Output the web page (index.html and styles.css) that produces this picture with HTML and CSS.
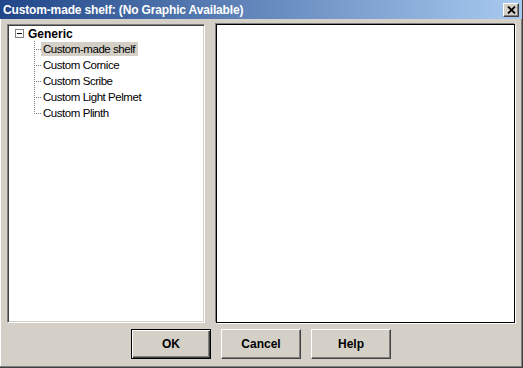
FILE: index.html
```html
<!DOCTYPE html>
<html lang="en">

<head>
    <meta charset="UTF-8">
    <title>Custom-made shelf</title>
    <link rel="stylesheet" href="styles.css">
</head>

<body>
    <div class="window">
        <div class="titlebar">
            <span class="title">Custom-made shelf: (No Graphic Available)</span>
            <button class="close">
                <svg width="9" height="8" viewBox="0 0 9 8">
                    <path d="M1 0.5 L8 7.5 M8 0.5 L1 7.5" stroke="#000" stroke-width="1.8" />
                </svg>
            </button>
        </div>

        <div class="content">
            <div class="tree-panel">
                <div class="tree-root">
                    <span class="expander"></span>
                    <span class="root-label">Generic</span>
                </div>
                <ul class="tree-items">
                    <li><span class="item selected">Custom-made shelf</span></li>
                    <li><span class="item">Custom Cornice</span></li>
                    <li><span class="item">Custom Scribe</span></li>
                    <li><span class="item">Custom Light Pelmet</span></li>
                    <li><span class="item">Custom Plinth</span></li>
                </ul>
            </div>

            <!-- preview area -->
            <div class="preview-panel"></div>
        </div>

        <div class="buttons">
            <button class="btn default">OK</button>
            <button class="btn">Cancel</button>
            <button class="btn">Help</button>
        </div>
    </div>
</body>

</html>
```

FILE: styles.css
```css
body {
    margin: 0;
    padding: 0;
    font-family: "Liberation Sans", Arial, sans-serif;
    font-size: 12px;
    background-color: #d4d0c8;
}

.window {
    width: 523px;
    height: 368px;
    box-sizing: border-box;
    display: flex;
    flex-direction: column;
    background-color: #d4d0c8;
    border-right: 1px solid #404040;
    border-bottom: 1px solid #404040;
    box-shadow: inset -1px -1px 0 #808080, inset 1px 0 0 #fff;
}

.titlebar {
    height: 19px;
    display: flex;
    align-items: center;
    justify-content: space-between;
    padding: 0 3px 0 3px;
    background: linear-gradient(to right, #214689, #a8caf0);
}

.title {
    color: #fff;
    font-weight: bold;
    font-size: 12px;
    letter-spacing: -0.15px;
    white-space: nowrap;
}

.close {
    width: 16px;
    height: 14px;
    padding: 0;
    margin-top: 1px;
    display: flex;
    align-items: center;
    justify-content: center;
    background-color: #d4d0c8;
    border: 1px solid;
    border-color: #fff #404040 #404040 #fff;
    box-shadow: inset -1px -1px 0 #808080;
}

.content {
    display: flex;
    gap: 11px;
    padding: 5px 0 0 7px;
}

.tree-panel {
    width: 198px;
    height: 299px;
    box-sizing: border-box;
    background-color: #fff;
    border: 1px solid;
    border-color: #808080 #fff #fff #808080;
    box-shadow: inset 1px 1px 0 #404040, inset -1px -1px 0 #d4d0c8;
    padding: 1px 0 0 7px;
}

.tree-root {
    display: flex;
    align-items: center;
    height: 15px;
}

.expander {
    width: 7px;
    height: 7px;
    border: 1px solid #808080;
    margin-right: 4px;
    background: linear-gradient(#000, #000) center / 5px 1px no-repeat;
}

.root-label {
    font-weight: bold;
    color: #000;
}

.tree-items {
    list-style: none;
    margin: 0 0 0 19px;
    padding: 0;
}

.tree-items li {
    height: 16px;
    display: flex;
    align-items: center;
    padding-left: 7px;
    background:
        repeating-linear-gradient(to bottom, #808080 0 1px, transparent 1px 2px) 0 0 / 1px 100% no-repeat,
        repeating-linear-gradient(to right, #808080 0 1px, transparent 1px 2px) 0 50% / 7px 1px no-repeat;
}

.tree-items li:last-child {
    background:
        repeating-linear-gradient(to bottom, #808080 0 1px, transparent 1px 2px) 0 0 / 1px 50% no-repeat,
        repeating-linear-gradient(to right, #808080 0 1px, transparent 1px 2px) 0 50% / 7px 1px no-repeat;
}

.item {
    padding: 1px 3px 1px 2px;
    font-size: 11.5px;
    letter-spacing: -0.45px;
    color: #000;
}

.item.selected {
    background-color: #d4d0c8;
}

.preview-panel {
    width: 299px;
    height: 299px;
    box-sizing: border-box;
    background-color: #fff;
    border: 1px solid #000;
    box-shadow: -1px -1px 0 #808080, 1px 1px 0 #fff;
}

.buttons {
    display: flex;
    gap: 10px;
    padding: 6px 0 0 131px;
}

.btn {
    width: 80px;
    height: 30px;
    padding: 0;
    font-family: "Liberation Sans", Arial, sans-serif;
    font-size: 12px;
    font-weight: bold;
    color: #000;
    background-color: #d4d0c8;
    border: 1px solid;
    border-color: #fff #404040 #404040 #fff;
    box-shadow: inset -1px -1px 0 #808080;
}

.btn.default {
    border-color: #000;
    box-shadow: inset 1px 1px 0 #fff, inset -1px -1px 0 #404040, inset -2px -2px 0 #808080;
}
```
